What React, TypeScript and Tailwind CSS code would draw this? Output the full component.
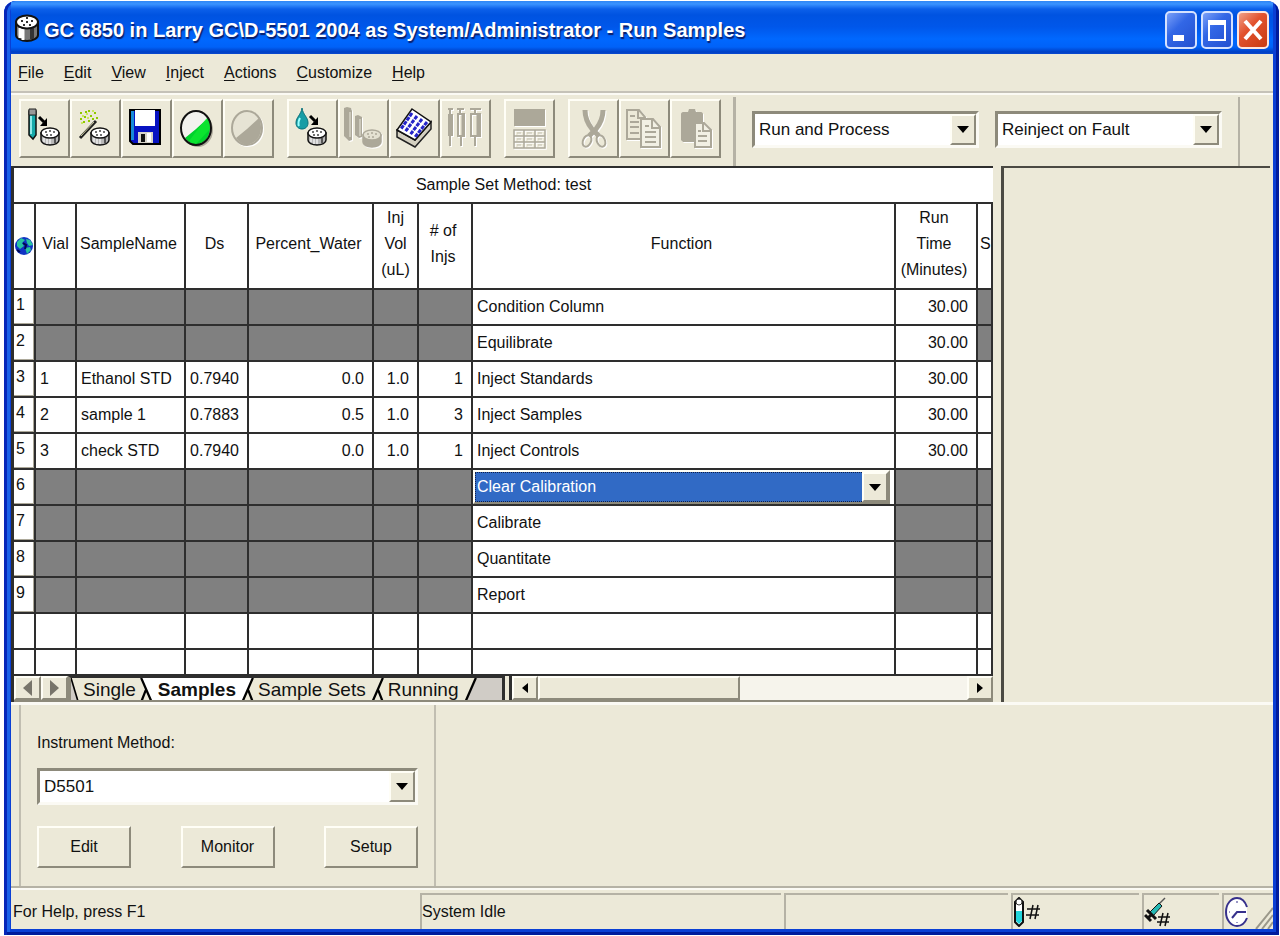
import { useState } from 'react';
import type { ReactNode } from 'react';

type Row = {
  id: number;
  vial?: string;
  name?: string;
  ds?: string;
  water?: string;
  vol?: string;
  injs?: string;
  fn: string;
  time?: string;
};

const rows: Row[] = [
  { id: 1, fn: 'Condition Column', time: '30.00' },
  { id: 2, fn: 'Equilibrate', time: '30.00' },
  { id: 3, vial: '1', name: 'Ethanol STD', ds: '0.7940', water: '0.0', vol: '1.0', injs: '1', fn: 'Inject Standards', time: '30.00' },
  { id: 4, vial: '2', name: 'sample 1', ds: '0.7883', water: '0.5', vol: '1.0', injs: '3', fn: 'Inject Samples', time: '30.00' },
  { id: 5, vial: '3', name: 'check STD', ds: '0.7940', water: '0.0', vol: '1.0', injs: '1', fn: 'Inject Controls', time: '30.00' },
  { id: 6, fn: 'Clear Calibration' },
  { id: 7, fn: 'Calibrate' },
  { id: 8, fn: 'Quantitate' },
  { id: 9, fn: 'Report' },
];

const menus = ['File', 'Edit', 'View', 'Inject', 'Actions', 'Customize', 'Help'];
const tabs = ['Single', 'Samples', 'Sample Sets', 'Running'];

const raised = 'border-2 border-t-[#fffef6] border-l-[#fffef6] border-r-[#8d8a7b] border-b-[#8d8a7b] bg-[#ece9d8]';
const sunken = 'border-[3px] border-t-[#8d8a7b] border-l-[#8d8a7b] border-r-[#fbfaf4] border-b-[#fbfaf4] bg-white';

// sample carousel, 19x18 with its top left corner at x, y
function Carousel({ x, y, off = false }: { x: number; y: number; off?: boolean }) {
  const line = off ? '#aca899' : '#111';
  return (
    <g transform={`translate(${x} ${y})`}>
      <path d="M1 6v7c0 3 4 5 9 5s9-2 9-5V6z" fill={off ? '#aca899' : '#b8b8b8'} stroke={line} strokeWidth="1.5" />
      <path d="M4 10v5M7 11v6M10 11v6" stroke={off ? '#aca899' : '#eee'} strokeWidth="1.5" />
      <path d="M15 11v5" stroke={off ? '#aca899' : '#555'} strokeWidth="2" />
      <ellipse cx="10" cy="6" rx="9" ry="5" fill={off ? '#e4e1d2' : '#fff'} stroke={line} strokeWidth="1.5" />
      <path d="M5 5h2M9 4h2M13 5h2M6 8h2M10 8h2" stroke={off ? '#aca899' : '#444'} strokeWidth="1.5" />
    </g>
  );
}

function Arrow({ x, y }: { x: number; y: number }) {
  return (
    <g transform={`translate(${x} ${y})`}>
      <path d="M0 0l5 5" stroke="#000" strokeWidth="3" />
      <path d="M8 1v8H1z" fill="#000" />
    </g>
  );
}

function Tool({ label, disabled, children }: { label: string; disabled?: boolean; children: ReactNode }) {
  return (
    <button type="button" aria-label={label} disabled={disabled} className={`${raised} h-[59px] w-[51px] shrink-0`}>
      <svg viewBox="2 2 47 55" className={`h-[55px] w-[47px] ${disabled ? 'drop-shadow-[1px_1px_0_#fff]' : ''}`} fill="none" aria-hidden="true">
        {children}
      </svg>
    </button>
  );
}

function DropArrow() {
  return (
    <span className={`${raised} pointer-events-none absolute inset-y-0 right-0 flex w-[26px] items-center justify-center`}>
      <svg viewBox="0 0 12 7" className="h-[7px] w-3" aria-hidden="true">
        <path d="M0 0h12L6 7z" fill="#000" />
      </svg>
    </span>
  );
}

function Select({ label, id, options, className }: { label: string; id: string; options: string[]; className: string }) {
  return (
    <div className={`${sunken} relative h-[37px] ${className}`}>
      <select id={id} aria-label={label} className="h-full w-full appearance-none bg-white pl-1 text-[17px] leading-6 outline-none">
        {options.map((o) => (
          <option key={o}>{o}</option>
        ))}
      </select>
      <DropArrow />
    </div>
  );
}

function TitleBar() {
  return (
    <header className="flex h-[53px] items-center bg-[linear-gradient(#2f86f5_0,#3a93ff_3px,#0c60ea_8px,#0053e1_14px,#0057ea_26px,#0068ff_38px,#0062f8_46px,#003fc4_51px,#0a4ad0)] pr-1">
      <svg viewBox="0 0 24 28" className="ml-1 h-7 w-6" aria-hidden="true">
        <path d="M1 8v13c0 3 5 6 11 6s11-3 11-6V8z" fill="#777" stroke="#111" strokeWidth="2" />
        <path d="M5 14v10M8 15v11" stroke="#fff" strokeWidth="3" />
        <path d="M17 14v11" stroke="#333" strokeWidth="4" />
        <ellipse cx="12" cy="8" rx="11" ry="6.5" fill="#fff" stroke="#111" strokeWidth="2" />
        <path d="M6 7h2M11 4h2M16 7h2M8 11h2M14 11h2M11 8h2" stroke="#333" strokeWidth="2" />
      </svg>
      <h1 className="ml-[5px] flex-1 whitespace-nowrap pt-1 text-[20px] leading-7 font-bold text-white [text-shadow:1px_2px_1px_#0a1e6a]">
        GC 6850 in Larry GC\D-5501 2004 as System/Administrator - Run Samples
      </h1>
      <div className="flex gap-1 pt-1">
        <button type="button" aria-label="Minimize" className="h-[38px] w-8 rounded-[5px] border-2 border-[#d5e2ff] bg-[linear-gradient(135deg,#7ba0f8,#3267e6_40%,#2350d0)]">
          <svg viewBox="0 0 28 34" className="h-[34px] w-7" aria-hidden="true">
            <path d="M6 22h11v6H6z" fill="#fff" />
          </svg>
        </button>
        <button type="button" aria-label="Maximize" className="h-[38px] w-8 rounded-[5px] border-2 border-[#d5e2ff] bg-[linear-gradient(135deg,#7ba0f8,#3267e6_40%,#2350d0)]">
          <svg viewBox="0 0 28 34" className="h-[34px] w-7" aria-hidden="true">
            <path d="M6 8h16v19H6z" fill="none" stroke="#fff" strokeWidth="2" />
            <path d="M5 7h18v5H5z" fill="#fff" />
          </svg>
        </button>
        <button type="button" aria-label="Close" className="h-[38px] w-8 rounded-[5px] border-2 border-[#ffe4dc] bg-[linear-gradient(135deg,#f0a088,#e2532f_40%,#c83a12)]">
          <svg viewBox="0 0 28 34" className="h-[34px] w-7" aria-hidden="true">
            <path d="M6 8l16 18M22 8L6 26" stroke="#fff" strokeWidth="4" />
          </svg>
        </button>
      </div>
    </header>
  );
}

function Toolbar() {
  return (
    <div className="flex h-[75px] items-stretch border-t-2 border-t-[#c5c2b8] pl-2 shadow-[inset_0_2px_0_#fbfaf4]">
      <div className="flex items-center gap-[13px] pb-0.5">
        <div className="flex">
          <Tool label="Inject vial">
            <path d="M10 12h7v24l-3 4-4-4z" fill="#17a9a9" stroke="#111" strokeWidth="1.5" />
            <path d="M12 17v18" stroke="#b8ffff" strokeWidth="1.5" />
            <path d="M10 10h7v6h-7z" fill="#999" stroke="#222" />
            <Arrow x={20} y={18} />
            <Carousel x={21} y={28} />
          </Tool>
          <Tool label="Sample wizard">
            <path d="M10 39l16-17" stroke="#222" strokeWidth="3" />
            <path d="M11 37l13-14" stroke="#c9c9a0" strokeWidth="1" />
            <path d="M10 14h2M14 18h2M18 12h2M20 17h2M24 14h2M13 23h2M18 22h2M10 20h2M22 20h2M15 13h2M26 19h2" stroke="#8fc800" strokeWidth="2" />
            <path d="M12 17h2M16 15h2M22 12h2M17 19h2M11 24h2" stroke="#c8e860" strokeWidth="2" />
            <Carousel x={20} y={28} />
          </Tool>
          <Tool label="Save">
            <path d="M9 11h30v34H12l-3-3z" fill="#0712c2" stroke="#000" strokeWidth="2" />
            <path d="M10 12h3v29h-3z" fill="#178ad8" />
            <path d="M14 11h20v16H14z" fill="#fff" />
            <path d="M17 33h15v11H17z" fill="#d6d3c8" />
            <path d="M20 35h4v8h-4z" fill="#111" />
            <path d="M26 34h4v9h-4z" fill="#fff" />
          </Tool>
          <Tool label="Start">
            <ellipse cx="26" cy="31" rx="15" ry="17" fill="#aca899" />
            <ellipse cx="24" cy="29" rx="15" ry="17" fill="#f2f2ee" />
            <path d="M36 19C40 28 38 39 31 43c-6 4-13 3-18-4l11-9z" fill="#00d22c" />
            <path d="M33 21l3-3c2 3 3 8 3 11L24 45c-3 0-5-1-7-3z" fill="#12ef32" opacity=".6" />
            <ellipse cx="24" cy="29" rx="15" ry="17" stroke="#111" strokeWidth="2" />
          </Tool>
          <Tool label="Stop" disabled>
            <ellipse cx="24" cy="29" rx="15" ry="17" fill="#e6e3d4" stroke="#aca899" strokeWidth="2" />
            <path d="M36 19C40 28 38 39 31 43c-6 4-13 3-18-4l11-9z" fill="#aca899" />
          </Tool>
        </div>
        <div className="flex">
          <Tool label="Direct inject">
            <path d="M15 9c1 7 6 9 6 15 0 4-3 6-6 6s-6-2-6-6c0-6 5-8 6-15z" fill="#189da5" stroke="#087078" />
            <path d="M13 19c-2 4-2 6-1 8" stroke="#9ff" strokeWidth="2" />
            <Arrow x={23} y={17} />
            <Carousel x={20} y={28} />
          </Tool>
          <Tool label="Load vials" disabled>
            <path d="M6 9l3-1 4 1 1 3v29l-3 1-5-5zM17 17l3-1 4 2v20l-3 1-4-3z" fill="#aca899" />
            <path d="M12 13v25M22 20v17" stroke="#cbc8ba" strokeWidth="2" />
            <Carousel x={24} y={30} off />
          </Tool>
          <Tool label="Plate">
            <path d="M8 31l18 10 16-18v7L26 48 8 38z" fill="#d4d0c0" stroke="#222" strokeWidth="1.5" />
            <path d="M23 10l19 13-16 18L8 31z" fill="#fff" stroke="#111" strokeWidth="1.5" />
            <path d="M23 14L12 30M28 17L16 33M33 20L21 36M38 23L26 38" stroke="#2424c8" strokeWidth="3" strokeDasharray="4 1" />
          </Tool>
          <Tool label="Syringes" disabled>
            <path d="M8 10h5M10 10v5M17 10h7M20 10v5M30 10h11M35 10v5" stroke="#aca899" strokeWidth="2" />
            <path d="M8 15h5v22H8z" fill="#aca899" />
            <path d="M18 15h6v22h-6zM31 15h9v22h-9z" stroke="#aca899" strokeWidth="2" />
            <path d="M23 15v22M38 15v22" stroke="#aca899" strokeWidth="3" />
            <path d="M10 37v10M21 37v10M35 37v10" stroke="#aca899" strokeWidth="2" />
          </Tool>
        </div>
        <Tool label="Results table" disabled>
          <path d="M10 10h31v17H10z" fill="#aca899" />
          <path d="M10 31h31v18H10zM10 37h31M10 43h31M20 31v18M31 31v18" stroke="#aca899" strokeWidth="1.5" />
          <path d="M13 34h4M23 34h5M34 34h4M13 40h4M23 40h5M34 40h4M13 46h4M23 46h5M34 46h4" stroke="#bfbcae" strokeWidth="1" />
        </Tool>
        <div className="flex">
          <Tool label="Cut" disabled>
            <path d="M17 11c0 7 3 14 7 19l7 7M35 11c0 7-3 14-7 19l-7 7" stroke="#aca899" strokeWidth="5" />
            <ellipse cx="19" cy="42" rx="4" ry="6" transform="rotate(25 19 42)" stroke="#aca899" strokeWidth="2" />
            <ellipse cx="33" cy="42" rx="4" ry="6" transform="rotate(-25 33 42)" stroke="#aca899" strokeWidth="2" />
          </Tool>
          <Tool label="Copy" disabled>
            <path d="M8 11h12l6 7v22H8z" fill="#ece9d8" stroke="#aca899" strokeWidth="2" />
            <path d="M19 11v8h7M11 17h5M11 23h9M11 28h9M11 34h9" stroke="#aca899" strokeWidth="2" />
            <path d="M22 20h12l7 8v20H22z" fill="#f2f0e4" stroke="#aca899" strokeWidth="2" />
            <path d="M33 20v9h8M26 27h4M26 33h11M26 38h11M26 43h11" stroke="#aca899" strokeWidth="2" />
          </Tool>
          <Tool label="Paste" disabled>
            <path d="M11 15c0-1 1-2 2-2h5l1-3h6l1 3h5c1 0 2 1 2 2v28H13l-2-2z" fill="#aca899" />
            <path d="M25 24h9l7 7v17H25z" fill="#f2f0e4" stroke="#aca899" strokeWidth="2" />
            <path d="M33 24v8h8M28 32h3M28 37h9M28 42h9" stroke="#aca899" strokeWidth="2" />
          </Tool>
        </div>
      </div>
      <div className="mt-1 ml-3 flex items-center gap-4 border-l-[3px] border-l-[#b5b2a5] pb-1 pl-4">
        <Select id="run-mode" label="Run mode" options={['Run and Process', 'Run Only', 'Run and Report']} className="w-[227px]" />
        <Select id="fault-mode" label="Fault handling" options={['Reinject on Fault', 'Stop on Fault']} className="w-[227px]" />
      </div>
      <div className="mt-1 ml-4 border-l-2 border-l-[#b5b2a5]" />
    </div>
  );
}

const cell = 'border-r-2 border-b-2 border-[#2e2e2e] p-0 font-normal whitespace-nowrap';

function Cell({ value, align }: { value?: string; align: string }) {
  return <td className={`${cell} ${align} ${value === undefined ? 'bg-[#808080]' : 'bg-white'}`}>{value}</td>;
}

function SampleTable() {
  return (
    <table className="w-full table-fixed border-separate border-spacing-0 bg-white leading-[26px]">
      <caption className="h-9 border-b-2 border-[#2e2e2e] bg-white pt-1">Sample Set Method: test</caption>
      <colgroup>
        <col className="w-[22px]" />
        <col className="w-[41px]" />
        <col className="w-[109px]" />
        <col className="w-[63px]" />
        <col className="w-[125px]" />
        <col className="w-[45px]" />
        <col className="w-[54px]" />
        <col />
        <col className="w-[82px]" />
        <col className="w-[15px]" />
      </colgroup>
      <thead>
        <tr className="h-[86px]">
          <th scope="col" aria-label="Row" className={cell}>
            <svg viewBox="0 0 20 20" className="h-5 w-5" aria-hidden="true">
              <circle cx="10" cy="10" r="9" fill="#1033c4" />
              <path d="M3 6l4-4 4 2-3 3 2 3-4 3-3-3zM12 3l4 1 3 5-4 1-2-3zM11 12l5-1 1 3-4 4z" fill="#27c4a0" />
              <path d="M9 7l3 2-1 4M3 14l3 2" stroke="#020b50" strokeWidth="2" fill="none" />
            </svg>
          </th>
          <th scope="col" className={`${cell} pb-1`}>Vial</th>
          <th scope="col" className={`${cell} pb-1 pr-1`}>SampleName</th>
          <th scope="col" className={`${cell} pb-1 pr-1`}>Ds</th>
          <th scope="col" className={`${cell} pb-1 pr-1`}>Percent_Water</th>
          <th scope="col" className={`${cell} pb-1`}>Inj<br />Vol<br />(uL)</th>
          <th scope="col" className={`${cell} pb-1 pr-1`}># of<br />Injs</th>
          <th scope="col" className={`${cell} pb-1 pr-1`}>Function</th>
          <th scope="col" className={`${cell} pb-1 pr-1`}>Run<br />Time<br />(Minutes)</th>
          <th scope="col" className={`${cell} overflow-hidden pb-1 pl-0.5 text-left`}>S</th>
        </tr>
      </thead>
      <tbody>
        {rows.map((r) => (
          <tr key={r.id} className="h-9">
            <th scope="row" className={`${cell} pb-1 pl-0.5 text-left shadow-[inset_-1px_-1px_0_#aca899]`}>{r.id}</th>
            <Cell value={r.vial} align="pl-1" />
            <Cell value={r.name} align="pl-1" />
            <Cell value={r.ds} align="pr-2 text-right" />
            <Cell value={r.water} align="pr-2 text-right" />
            <Cell value={r.vol} align="pr-2 text-right" />
            <Cell value={r.injs} align="pr-2 text-right" />
            {r.id === 6 ? (
              <td className={cell}>
                <div className={`${raised} relative mr-1 h-[34px] border-t-[#aca899] border-l-[#aca899]`}>
                  <select
                    aria-label="Function"
                    defaultValue={r.fn}
                    className="block h-full w-full appearance-none bg-[#316ac5] pl-0.5 text-white outline-1 -outline-offset-1 outline-dotted outline-[#10204a]"
                  >
                    {rows.map((o) => (
                      <option key={o.id}>{o.fn}</option>
                    ))}
                  </select>
                  <DropArrow />
                </div>
              </td>
            ) : (
              <td className={`${cell} pl-1`}>{r.fn}</td>
            )}
            <Cell value={r.time} align="pr-2 text-right" />
            <td className={`${cell} ${r.vial ? 'bg-white' : 'bg-[#808080]'}`} />
          </tr>
        ))}
        <tr className="h-9">
          {Array.from({ length: 10 }, (_, i) => (
            <td key={i} className={cell} />
          ))}
        </tr>
        <tr className="h-[26px]">
          {Array.from({ length: 10 }, (_, i) => (
            <td key={i} className={cell} />
          ))}
        </tr>
      </tbody>
    </table>
  );
}

function SheetTabs() {
  const [active, setActive] = useState('Samples');

  return (
    <div className="flex h-[26px] border-b-2 border-b-[#8d8a7b]">
      <button type="button" aria-label="Previous sheet" className={`${raised} flex w-[27px] items-center justify-center`}>
        <svg viewBox="0 0 9 16" className="h-4 w-[9px]" aria-hidden="true">
          <path d="M9 0v16L0 8z" fill="#77746a" />
        </svg>
      </button>
      <button type="button" aria-label="Next sheet" className={`${raised} flex w-[27px] items-center justify-center`}>
        <svg viewBox="0 0 9 16" className="h-4 w-[9px]" aria-hidden="true">
          <path d="M0 0v16l9-8z" fill="#77746a" />
        </svg>
      </button>
      <div className="flex w-[437px] overflow-hidden border-x-[3px] border-t-2 border-[#2e2e2e] border-l-[#8d8a7b] bg-[#d0ccc6]">
        <svg viewBox="0 0 10 24" preserveAspectRatio="none" className="h-6 w-2 shrink-0" aria-hidden="true">
          <path d="M0 0h10v24z" fill="#ece9d8" />
          <path d="M0 0l9 24" stroke="#000" strokeWidth="2" />
        </svg>
        {tabs.map((t, i) => (
          <div key={t} className="flex">
            <button
              type="button"
              onClick={() => setActive(t)}
              className={`h-6 px-1 text-[19px] leading-6 ${t === active ? 'bg-white font-bold' : 'bg-[#ece9d8]'}`}
            >
              {t}
            </button>
            <svg viewBox="0 0 12 24" preserveAspectRatio="none" className="h-6 w-3.5 shrink-0" aria-hidden="true">
              {i === 0 && (
                <>
                  <path d="M0 0h12v24H0z" fill="#ece9d8" />
                  <path d="M0 0h12v24h-2z" fill="#fff" />
                  <path d="M1 0l9 24M5 12L1 24" stroke="#000" strokeWidth="2" fill="none" />
                </>
              )}
              {i > 0 && (
                <>
                  <path d="M0 0h12L2 24H0z" fill={i === 1 ? '#fff' : '#ece9d8'} />
                  {i < 3 && <path d="M11 0h1v24H2z" fill="#ece9d8" />}
                  <path d={i < 3 ? 'M11 0L2 24M7 12l4 12' : 'M11 0L2 24'} stroke="#000" strokeWidth="2" fill="none" />
                </>
              )}
            </svg>
          </div>
        ))}
      </div>
      <div className="ml-1 flex min-w-0 flex-1 border-l-[3px] border-[#2e2e2e] bg-[#f6f4ec]">
        <button type="button" aria-label="Scroll left" className={`${raised} flex w-[26px] items-center justify-center`}>
          <svg viewBox="0 0 6 10" className="h-2.5 w-1.5" aria-hidden="true">
            <path d="M6 0v10L0 5z" fill="#000" />
          </svg>
        </button>
        <div className="flex flex-1">
          <div className={`${raised} w-[47%]`} />
        </div>
        <button type="button" aria-label="Scroll right" className={`${raised} flex w-[26px] items-center justify-center`}>
          <svg viewBox="0 0 6 10" className="h-2.5 w-1.5" aria-hidden="true">
            <path d="M0 0v10l6-5z" fill="#000" />
          </svg>
        </button>
      </div>
    </div>
  );
}

function StatusBar() {
  const pane = 'flex items-center border-t-2 border-l-2 border-[#b5b2a5]';
  return (
    <footer className="flex h-[43px] gap-[3px] border-t-2 border-t-[#b5b2a5] pt-[5px] shadow-[inset_0_2px_0_#fbfaf4]">
      <div className="flex w-[406px] items-center border-t-2 border-transparent pl-0.5">For Help, press F1</div>
      <div className={`${pane} w-[361px]`}>System Idle</div>
      <div className={`${pane} flex-1`} />
      <div className={`${pane} w-[128px]`}>
        <svg viewBox="0 0 28 30" className="h-[30px] w-7" fill="none" aria-hidden="true">
          <path d="M2 5l4-4 4 4v20l-4 4-4-4z" fill="#fff" stroke="#111" strokeWidth="2" />
          <path d="M3 14h6v10l-3 3-3-3z" fill="#21d5dc" />
          <circle cx="6" cy="5" r="3" fill="#fff" stroke="#333" />
          <path d="M20 8l-3 14M25 8l-3 14M14 12h13M13 18h13" stroke="#111" strokeWidth="1.5" />
        </svg>
      </div>
      <div className={`${pane} w-[77px]`}>
        <svg viewBox="0 0 28 30" className="h-[30px] w-7" fill="none" aria-hidden="true">
          <path d="M15 7l6-6" stroke="#555" strokeWidth="1.5" />
          <path d="M6 15l9-9 3 3-9 10z" fill="#25b9b4" stroke="#111" />
          <path d="M3 13l9 9M3 22l5-5M1 18l6 6" stroke="#111" strokeWidth="3" />
          <path d="M19 16l-3 13M24 16l-3 13M14 20h12M13 25h12" stroke="#111" strokeWidth="1.5" />
        </svg>
      </div>
      <div className={`${pane} w-[51px] justify-between`}>
        <svg viewBox="0 0 26 30" className="h-[30px] w-[26px]" fill="none" aria-hidden="true">
          <path d="M23 10C21 4 17 1 13 1 7 1 2 7 2 15s5 14 11 14c4 0 8-3 10-8" fill="#fff" stroke="#37318c" strokeWidth="2" />
          <path d="M8 21l5-6h9" stroke="#37318c" strokeWidth="2" />
          <path d="M13 4v2M5 15h1M13 25v1" stroke="#37318c" />
        </svg>
        <svg viewBox="0 0 18 22" className="h-[22px] w-[18px] self-end" aria-hidden="true">
          <path d="M1 22L18 1M7 22L18 8M13 22l5-7" stroke="#9b988a" strokeWidth="2" />
        </svg>
      </div>
    </footer>
  );
}

export default function App() {
  return (
    <div className="min-h-screen bg-white pt-px pr-px pb-px pl-1 font-['Liberation_Sans',sans-serif] text-base text-[#111]">
      <div className="flex min-h-[934px] flex-col overflow-hidden rounded-t-xl bg-[#0a3fd4] pr-1.5 pb-1.5 pl-[7px] shadow-[inset_3px_0_0_#0626b8,inset_-3px_-3px_0_#001c9c,inset_6px_0_0_#1a62e8]">
        <TitleBar />
        <main className="flex flex-1 flex-col bg-[#ece9d8]">
          <nav className="flex h-[37px] items-center gap-5 pl-[7px]">
            {menus.map((m) => (
              <button key={m} type="button" className="leading-6">
                <span className="underline underline-offset-2">{m[0]}</span>
                {m.slice(1)}
              </button>
            ))}
          </nav>
          <Toolbar />
          <div className="flex">
            <section className="min-w-0 flex-1 border-t-2 border-l-[3px] border-[#2e2e2e]">
              <SampleTable />
              <SheetTabs />
            </section>
            <aside className="mr-[3px] ml-2 w-[269px] border-t-2 border-l-[3px] border-[#4b4a43]" />
          </div>
          <div className="flex flex-1 border-t-[3px] border-t-[#fbfaf4] pl-2">
            <section className="w-[417px] border-x-2 border-[#c1beb1] px-4 pt-[26px]">
              <label htmlFor="method" className="block leading-6">Instrument Method:</label>
              <Select id="method" label="Instrument Method" options={['D5501']} className="mt-[13px] w-full" />
              <div className="mt-[21px] flex justify-between">
                {['Edit', 'Monitor', 'Setup'].map((b) => (
                  <button key={b} type="button" className={`${raised} h-[42px] w-[94px]`}>{b}</button>
                ))}
              </div>
            </section>
          </div>
          <StatusBar />
        </main>
      </div>
    </div>
  );
}
